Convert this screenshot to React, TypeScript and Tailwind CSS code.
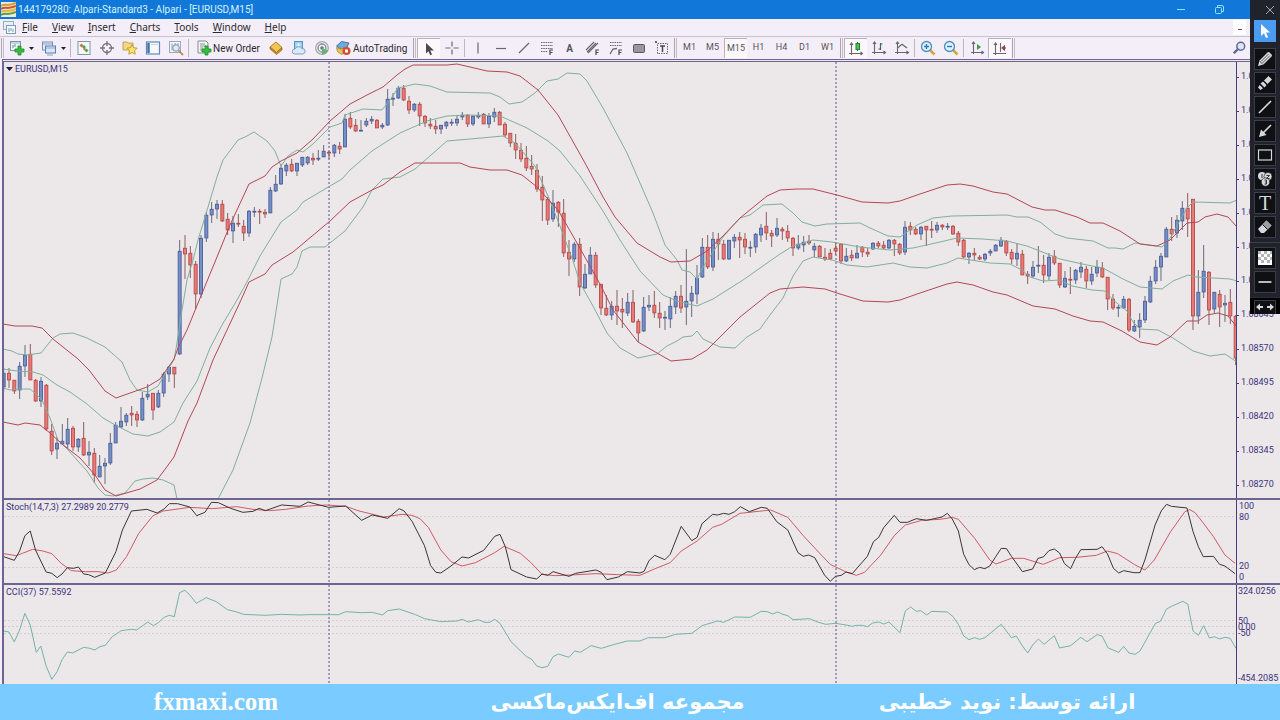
import type { ReactNode } from "react";

/* ---------- chart data ---------- */

// high, body top, body bottom, low, direction (u = up, d = down)
const CANDLES = `
368,373,387,392,u 368,373,380,388,d 380,380,391,394,d 362,366,390,399,u 345,355,366,377,u 344,354,380,380,d
379,380,401,402,d 377,381,401,407,u 384,385,429,431,d 424,431,451,455,d 437,443,449,459,u 424,441,444,444,u
418,429,444,448,u 426,428,447,451,d 438,439,447,452,u 422,438,455,456,d 441,452,455,466,u 448,453,475,483,d
455,466,477,477,u 458,463,466,484,u 433,443,463,465,u 422,425,443,443,u 407,421,427,428,u 413,415,422,426,u
406,413,415,426,d 411,414,420,427,d 392,398,420,421,u 384,394,397,400,u 393,393,410,420,d 390,393,407,408,u
372,374,393,397,u 366,367,374,382,u 367,367,374,388,d 240,251,354,355,u 235,248,254,279,d 246,253,265,278,d
261,264,294,309,d 235,238,294,298,u 212,215,238,242,u 202,209,215,223,u 200,204,209,219,u 200,204,221,222,d
213,219,230,235,d 216,223,231,243,u 214,223,224,227,d 220,226,233,241,d 210,211,233,237,u 207,211,212,217,u
209,211,212,224,d 209,212,214,218,d 187,190,213,213,u 175,184,191,192,u 164,168,184,185,u 163,165,171,176,u
159,164,171,172,d 163,163,171,176,u 157,157,165,167,u 156,157,163,165,u 153,158,160,165,d 150,158,159,161,u
145,151,157,157,u 151,152,153,159,d 144,145,153,157,u 142,146,149,154,d 114,119,147,147,u 112,118,127,129,d
119,125,131,132,d 120,130,131,131,u 118,121,125,127,u 116,119,121,124,u 119,120,128,128,d 123,125,127,129,u
89,99,125,126,u 93,98,99,106,u 86,88,98,99,u 85,88,100,101,d 96,101,110,114,d 103,104,110,112,u
102,104,116,126,d 115,116,123,127,d 118,124,126,129,d 120,126,129,134,d 125,125,129,134,u 121,122,126,129,u
119,122,123,126,u 116,119,123,126,u 112,115,117,120,u 114,115,124,127,d 115,116,124,126,u 112,115,117,119,u
113,114,124,124,d 113,116,124,128,u 108,112,117,122,u 111,112,125,125,d 122,124,135,137,d 133,133,143,147,d
134,143,150,159,d 143,150,159,162,d 146,158,168,171,d 155,166,169,175,d 164,170,189,192,d 176,187,200,221,d
197,199,220,225,d 190,203,219,222,u 201,202,212,227,d 199,213,253,257,d 240,252,259,276,d 242,244,259,262,u
238,244,287,296,d 264,274,288,289,u 247,255,274,274,u 252,255,285,288,d 284,284,308,315,d 295,308,315,316,d
301,306,315,320,u 290,306,311,325,d 298,309,312,328,d 293,302,313,316,u 290,302,322,323,d 319,321,333,342,d
297,307,331,332,u 295,305,307,311,u 291,305,313,318,d 302,313,318,328,d 311,317,318,330,u 297,306,319,328,u
291,296,307,314,u 285,296,308,313,d 249,301,307,325,u 286,293,301,317,u 265,278,294,304,u 238,247,277,278,u
235,247,267,269,d 232,239,267,271,u 233,239,244,260,d 240,244,259,260,d 240,240,259,260,u 234,237,241,248,u
232,237,240,258,d 233,239,247,254,d 241,247,248,257,u 233,234,247,253,u 224,228,235,242,u 212,226,233,240,d
230,233,236,247,d 218,228,235,237,u 227,229,231,240,d 225,231,238,242,d 237,238,248,256,d 235,244,248,250,u
236,242,245,252,u 235,241,243,245,d 243,246,250,257,u 245,246,257,257,d 248,257,259,261,d 249,253,259,260,d
242,248,251,255,d 244,244,261,264,d 248,256,261,262,u 250,255,258,261,d 245,253,258,258,u 246,247,252,257,d
248,252,254,257,d 242,243,249,250,u 241,243,246,248,d 241,245,248,249,d 239,240,248,249,u 239,240,244,256,d
243,244,253,255,d 221,227,252,255,u 222,226,230,235,d 227,229,234,235,d 226,227,234,240,u 226,226,230,246,d
221,229,230,238,d 222,225,230,233,u 224,225,227,230,d 223,226,227,230,u 225,226,234,235,d 231,233,242,246,d
239,240,257,258,d 252,253,257,264,u 248,253,255,261,d 255,257,259,260,d 253,254,259,261,u 249,251,253,256,u
244,245,251,251,u 237,240,246,247,u 240,241,253,256,d 249,252,259,264,d 243,253,259,266,u 250,254,275,275,d
271,274,276,284,d 261,267,276,278,u 246,265,266,273,u 255,265,275,283,d 253,257,276,280,u 250,256,263,265,d
263,263,285,288,d 271,278,287,288,u 267,279,280,294,d 269,270,280,284,u 262,267,272,278,u 266,269,281,288,d
267,274,281,285,u 260,267,273,277,u 262,268,277,278,d 277,277,299,310,d 294,299,308,310,d 305,307,308,317,u
296,299,308,309,u 298,299,330,332,d 320,326,331,332,u 313,320,327,338,u 296,301,320,323,u 276,281,302,303,u
260,267,281,284,u 253,256,267,281,u 227,229,257,257,u 217,229,234,241,d 215,220,233,238,u 201,208,221,230,u
193,208,219,237,d 199,199,316,330,d 270,292,316,324,u 245,271,292,298,u 271,272,310,325,d 292,292,309,313,u
290,294,307,327,d 295,303,305,322,u 289,302,316,324,d 315,316,358,365,d`
  .trim()
  .split(/\s+/)
  .map((row) => {
    const [h, t, b, l, dir] = row.split(",");
    return { high: +h, top: +t, bottom: +b, low: +l, up: dir === "u" };
  });

const ENVELOPES = [
  "3,324 15,326 32,326 42,328 53,339 68,351 78,359 89,370 105,391 116,398 133,392 147,387 160,379 174,359 178,348 187,330 196,308 217,257 230,225 249,184 265,176 272,167 281,161 297,153 313,139 330,121 350,104 367,95 383,87 397,75 405,69 413,65 447,65 457,64 470,67 487,71 507,72 520,76 538,90 558,115 585,163 603,197 615,217 637,243 660,257 671,262 690,261 707,251 723,236 740,218 767,196 780,190 797,189 813,189 837,195 862,202 888,203 900,201 920,194 947,185 960,184 973,186 993,192 1007,194 1032,207 1045,210 1055,210 1077,217 1090,223 1103,223 1120,231 1140,244 1157,246 1170,240 1187,223 1198,222 1205,217 1217,214 1228,217 1237,227",
  "3,422 18,425 25,423 40,425 50,433 62,444 80,458 95,475 105,490 116,496 140,489 157,480 163,472 174,457 188,421 197,403 213,360 227,330 241,300 249,282 265,274 272,265 293,252 330,221 350,202 372,190 383,185 400,172 415,163 460,163 470,167 490,170 507,170 522,175 537,187 558,210 577,243 600,284 613,310 638,342 657,353 671,361 692,359 707,350 740,317 770,293 780,289 803,287 825,289 840,294 863,301 888,302 900,300 920,293 947,284 957,282 973,285 993,292 1007,295 1033,306 1055,309 1073,316 1090,321 1103,322 1122,331 1140,342 1157,345 1170,337 1187,321 1198,321 1207,315 1218,313 1228,316 1237,327",
];

const BANDS = [
  "3,349 12,351 18,354 27,355 41,353 53,338 60,334 73,333 87,338 105,347 122,362 130,380 137,390 148,392 158,386 165,374 174,360 177,343 182,310 187,280 193,260 198,240 205,217 217,177 223,160 238,140 247,136 254,132 267,141 275,151 281,166 288,156 297,150 303,152 313,144 330,127 342,123 345,115 363,109 382,110 390,100 398,88 415,84 430,86 447,92 490,93 500,97 509,104 522,102 535,93 547,81 558,79 567,73 580,74 587,81 603,108 627,153 653,213 665,245 677,260 682,270 690,272 697,279 703,267 723,237 740,218 750,215 763,205 782,204 793,213 802,222 815,226 827,224 860,223 870,228 888,236 900,237 917,225 933,218 952,216 1007,215 1017,217 1028,217 1040,222 1055,234 1067,238 1093,241 1108,248 1115,248 1123,249 1135,243 1162,247 1170,238 1187,208 1193,202 1230,203 1237,200",
  "3,369 17,371 33,372 43,375 57,385 70,392 87,404 103,418 117,426 133,434 148,436 160,432 174,422 183,403 197,381 210,348 222,325 237,300 248,280 260,256 281,222 297,210 303,202 330,186 342,179 350,170 372,151 400,133 427,121 447,116 467,115 500,116 527,128 548,141 560,151 580,176 603,211 620,240 640,271 663,295 677,301 697,306 713,299 743,280 780,254 793,246 813,240 832,242 860,247 890,250 913,248 940,242 957,238 983,239 1007,241 1027,246 1060,259 1087,265 1103,268 1123,279 1140,287 1162,289 1173,281 1188,275 1197,277 1230,279 1237,281",
  "3,388 10,390 20,389 30,389 35,393 42,400 50,418 58,440 68,450 87,471 98,488 105,495 113,496 125,493 135,481 143,479 153,478 163,480 174,485 177,499",
  "218,499 233,470 250,423 262,378 272,337 277,305 281,279 292,274 297,267 302,251 310,247 325,247 345,231 363,207 372,190 383,179 400,177 415,169 447,141 470,139 503,136 515,143 535,166 548,196 560,226 573,261 580,283 593,306 607,333 620,348 638,358 657,354 667,346 677,341 683,337 692,336 697,331 703,339 720,347 735,348 747,337 760,329 770,315 783,298 793,276 803,261 813,257 832,260 847,265 867,267 893,263 910,267 927,268 947,263 958,258 990,263 1010,264 1022,270 1030,277 1043,281 1060,280 1072,286 1092,290 1105,291 1113,300 1127,311 1133,322 1140,329 1158,330 1173,338 1193,351 1210,356 1225,354 1237,362",
];

// indicator series are sampled on a finer grid: 2.45 units per column, 3 per row
const STOCH_MAIN =
  "9,185 35,196 48,168 61,122 74,108 87,165 113,231 127,235 140,248 152,237 165,218 180,220 192,216 205,237 217,239 232,247 258,234 284,170 300,105 322,48 360,43 385,54 402,42 415,26 435,26 465,36 482,62 502,52 518,22 535,23 565,40 595,52 620,49 635,40 650,47 690,30 735,34 755,21 805,37 847,33 886,76 912,60 950,70 978,41 990,48 1010,80 1040,152 1055,212 1068,232 1080,234 1105,213 1132,186 1148,189 1185,166 1212,124 1225,118 1238,155 1252,224 1290,246 1315,252 1328,237 1342,241 1355,230 1394,244 1410,235 1460,225 1473,232 1487,254 1515,246 1537,230 1568,234 1578,229 1590,197 1604,181 1629,194 1642,178 1655,138 1669,94 1695,137 1708,127 1720,86 1746,58 1758,60 1773,55 1786,58 1800,50 1814,35 1836,50 1865,37 1880,40 1903,80 1930,105 1955,173 1968,184 1981,180 1996,188 2020,240 2034,259 2047,244 2061,241 2073,231 2088,236 2125,184 2140,140 2153,127 2165,98 2191,61 2205,82 2223,82 2245,71 2270,76 2308,66 2321,55 2333,72 2348,108 2361,178 2374,209 2387,224 2400,217 2413,221 2425,213 2440,184 2453,160 2466,161 2478,184 2505,230 2530,222 2543,190 2556,186 2570,167 2583,162 2596,174 2608,206 2623,221 2635,190 2648,164 2688,163 2700,155 2713,176 2728,220 2741,234 2753,227 2778,233 2793,233 2805,195 2830,90 2845,48 2858,28 2870,34 2908,39 2923,110 2936,155 2948,185 2973,184 2988,208 3001,213 3026,236";
const STOCH_SIGNAL =
  "9,176 40,182 55,175 80,163 105,168 127,176 150,205 175,227 210,230 240,230 265,234 285,225 310,185 340,115 375,62 400,48 465,37 520,41 580,35 620,43 660,47 700,43 755,33 800,30 847,34 880,48 940,66 985,58 1010,61 1030,72 1050,98 1080,165 1105,200 1132,213 1165,203 1212,173 1235,154 1275,175 1300,202 1328,238 1360,242 1400,240 1460,236 1515,239 1568,241 1603,222 1642,203 1669,168 1708,138 1746,97 1768,88 1813,55 1888,45 1930,67 1968,122 2003,168 2034,208 2073,231 2098,241 2118,232 2158,180 2191,122 2218,90 2258,76 2303,73 2333,67 2348,73 2388,130 2425,195 2440,207 2478,190 2508,190 2556,208 2596,188 2638,187 2686,181 2713,168 2738,176 2780,209 2805,225 2828,195 2868,110 2903,50 2915,44 2928,53 2948,84 2973,125 3001,180 3026,205";
const CCI =
  "9,408 22,411 35,441 48,405 61,355 74,390 89,472 100,453 113,513 127,553 140,530 152,494 165,471 178,474 205,457 220,460 232,465 245,455 258,451 275,425 297,407 322,403 335,405 362,381 376,392 388,383 402,367 415,361 427,365 440,293 453,286 465,300 481,325 505,308 530,320 557,344 580,351 597,358 650,361 690,358 735,360 755,359 830,359 847,350 885,353 912,352 937,360 950,347 978,342 1018,359 1040,371 1080,380 1120,378 1132,373 1148,381 1172,374 1187,382 1200,382 1212,373 1225,385 1252,440 1290,485 1302,492 1315,513 1328,518 1342,514 1355,485 1368,477 1394,487 1408,468 1422,472 1448,452 1473,460 1500,450 1537,438 1568,438 1588,428 1629,428 1655,418 1695,415 1720,392 1758,378 1773,382 1800,366 1838,367 1865,349 1880,350 1893,357 1905,351 1918,358 1930,362 1943,374 1983,371 2003,381 2023,388 2047,385 2073,390 2088,394 2098,391 2113,391 2125,395 2138,384 2153,381 2165,387 2178,381 2205,413 2218,348 2231,336 2245,349 2256,347 2270,360 2283,349 2321,351 2335,365 2348,388 2361,423 2374,434 2388,428 2400,433 2413,428 2453,388 2478,428 2490,423 2505,453 2518,474 2530,450 2544,432 2558,448 2583,422 2596,459 2623,452 2648,427 2663,440 2688,419 2700,423 2715,459 2741,472 2753,454 2766,474 2781,478 2793,468 2818,413 2831,385 2843,379 2858,342 2870,334 2898,319 2910,327 2923,408 2936,421 2949,392 2963,429 2975,425 2988,432 3001,427 3014,430 3028,460";

const GRID = "translate(0 495) scale(0.408163 0.333333)";
const DAY_LINES = [329, 836];
const PRICES = Array.from({ length: 13 }, (_, i) => (1.0917 - i * 0.00075).toFixed(5));

/* ---------- chart parts ---------- */

function Line({ points, color, transform }: { points: string; color: string; transform?: string }) {
  return (
    <polyline
      points={points}
      transform={transform}
      fill="none"
      stroke={color}
      strokeWidth="1"
      strokeLinejoin="round"
      vectorEffect="non-scaling-stroke"
    />
  );
}

function DayLines({ top, bottom }: { top: number; bottom: number }) {
  return (
    <>
      {DAY_LINES.map((x) => (
        <path key={x} d={`M${x} ${top}V${bottom}`} stroke="#54528c" strokeDasharray="2 2" vectorEffect="non-scaling-stroke" />
      ))}
    </>
  );
}

function Levels({ at }: { at: number[] }) {
  return (
    <>
      {at.map((y) => (
        <path key={y} d={`M4 ${y}H1236`} stroke="#d3cdcf" strokeDasharray="2 2" vectorEffect="non-scaling-stroke" />
      ))}
    </>
  );
}

function Pane({
  title,
  top,
  height,
  sizeClass,
  plot,
  axis,
  marker,
}: {
  title: string;
  top: number;
  height: number;
  sizeClass: string;
  plot: ReactNode;
  axis: ReactNode;
  marker?: boolean;
}) {
  return (
    <section className={`relative flex shrink-0 ${sizeClass}`} aria-label={title}>
      <svg className="h-full min-w-0 flex-1" viewBox={`4 ${top} 1232 ${height}`} preserveAspectRatio="none" aria-hidden="true">
        {plot}
      </svg>
      <h2 className="absolute left-0.5 top-px flex h-3 items-center gap-0.5 text-[9px] leading-3 text-[#3a3480]">
        {marker && (
          <svg className="h-1 w-[7px]" viewBox="0 0 7 4" aria-hidden="true">
            <path d="M0 0h7L3.500 4z" fill="#1b1850" />
          </svg>
        )}
        {title}
      </h2>
      <div className="flex w-11 shrink-0 flex-col border-l border-[#443d80] text-[9px] text-[#3a3480]">{axis}</div>
    </section>
  );
}

/* ---------- toolbar parts ---------- */

function Svg({ children, className = "size-4" }: { children: ReactNode; className?: string }) {
  return (
    <svg className={`${className} shrink-0`} viewBox="0 0 16 16" fill="none" aria-hidden="true">
      {children}
    </svg>
  );
}

function Tool({ label, active, children }: { label: string; active?: boolean; children: ReactNode }) {
  return (
    <button
      type="button"
      aria-label={label}
      className={`flex h-5 w-[23px] items-center justify-center text-[9px] text-[#56525c] ${active ? "border-l border-t border-[#b9b2ba] bg-[#fbf8fc]" : ""}`}
    >
      {children}
    </button>
  );
}

const Separator = () => <span className="mx-px h-[18px] w-px bg-[#bdb5bf]" />;
const Grip = () => (
  <span className="flex gap-px px-px">
    <span className="h-5 w-px bg-[#aaa3ad]" />
    <span className="h-5 w-px bg-[#c4bdc7]" />
  </span>
);
const Caret = () => (
  <svg className="h-[3px] w-[5px]" viewBox="0 0 5 3" aria-hidden="true">
    <path d="M0 0h5L2.500 3z" fill="#222" />
  </svg>
);

const gray = "#6a666e";

const icons = {
  newChart: (
    <Svg>
      <rect x="1.500" y="1.500" width="10" height="9" fill="#eef3f8" stroke="#7e93ad" />
      <path d="M2 3h9" stroke="#9fb3ca" />
      <path d="M4 8V5M6 7V4" stroke="#6c8f84" />
      <path d="M9 6h3v3h3v3h-3v3H9v-3H6V9h3z" fill="#35c13f" stroke="#1a8a26" strokeWidth=".8" />
    </Svg>
  ),
  profiles: (
    <Svg>
      <rect x="1.500" y="2" width="10" height="8" fill="#e6eef7" stroke="#7590b5" />
      <path d="M2 4h9" stroke="#86a3c8" />
      <rect x="4.500" y="6" width="10" height="7" fill="#dbe7f4" stroke="#5f80ad" />
      <path d="M5 8h9M6 15h6" stroke="#86a3c8" />
    </Svg>
  ),
  market: (
    <Svg>
      <rect x="2" y="1.500" width="12" height="13" fill="#f5f8fb" stroke="#7f96ae" />
      <path d="M5.500 3.500l2 2-2 2-2-2z" fill="#d9664f" />
      <path d="M8 5l2 2-2 2-2-2z" fill="#3cae46" />
      <path d="M10.500 8.500l2 2-2 2-2-2z" fill="#3cae46" />
      <path d="M8.500 7.500l1.500 1.500-1.500 1.500L7 9z" fill="#d9664f" />
    </Svg>
  ),
  dataWindow: (
    <Svg>
      <circle cx="8" cy="8" r="4.500" stroke="#77727c" strokeWidth="1.300" />
      <path d="M8 1v5M8 10v5M1 8h5M10 8h5" stroke="#77727c" strokeWidth="1.300" />
    </Svg>
  ),
  navigator: (
    <Svg>
      <path d="M1 4V2h4l1 1h5v7H1z" fill="#f3d884" stroke="#b8923c" strokeWidth=".8" />
      <path d="M10 4.500l1.600 3.200 3.500.5-2.500 2.500.6 3.500L10 12.500l-3.200 1.700.6-3.500L5 8.200l3.500-.5z" fill="#fbe36d" stroke="#bd9423" strokeWidth=".9" />
    </Svg>
  ),
  terminal: (
    <Svg>
      <rect x="1.500" y="2" width="13" height="12" fill="#f5f9fd" stroke="#6789b8" strokeWidth="1.200" />
      <path d="M3.500 3v10" stroke="#4672ad" strokeWidth="2.500" />
      <path d="M6 4.500h7" stroke="#c8d6e6" />
    </Svg>
  ),
  tester: (
    <Svg>
      <rect x="1.500" y="1.500" width="11" height="11" fill="#f4f5f8" stroke="#a2a9b5" />
      <path d="M4 3.500v7M7 3v3M10 3v2" stroke="#8ba3bd" />
      <circle cx="8" cy="8" r="3.300" fill="#dcebf5" stroke="#7592ae" />
      <path d="M10.500 10.500L15 15" stroke="#b7906a" strokeWidth="1.800" />
    </Svg>
  ),
  order: (
    <Svg>
      <path d="M2 1h8l2 2v10H2z" fill="#f4f5f6" stroke="#858b90" />
      <path d="M4 4h5M4 6h6M4 8h3M4 10h3" stroke="#8d9694" />
      <path d="M9 6h3v3h3v3h-3v3H9v-3H6V9h3z" fill="#35c13f" stroke="#1a8a26" strokeWidth=".8" />
    </Svg>
  ),
  book: (
    <Svg>
      <path d="M2 7l6-5 6 5.500-5.500 5z" fill="#f1c553" stroke="#b07d23" />
      <path d="M2 7l6.500 5.500L14 7.500V10l-5.500 4.500L2 9z" fill="#c98f2b" stroke="#a06f1e" strokeWidth=".8" />
    </Svg>
  ),
  cloud: (
    <Svg>
      <rect x="3.500" y="1.500" width="8" height="7" fill="#9fd0ef" stroke="#4f94c4" />
      <path d="M7.500 3v4M5.500 5h4" stroke="#fff" />
      <path d="M3.500 14a2.500 2.500 0 01.5-5 4 4 0 017-.5 2.800 2.800 0 011 5.500z" fill="#dbe8f6" stroke="#7f9fc9" />
    </Svg>
  ),
  signals: (
    <Svg>
      <circle cx="8" cy="8" r="6.300" stroke="#a6a9ac" strokeWidth="1.300" />
      <circle cx="8" cy="8" r="4" stroke="#88908f" strokeWidth="1.300" />
      <circle cx="8" cy="8" r="1.800" fill="#5f7f70" />
      <path d="M8 8v6.500a6.500 6.500 0 006-4z" fill="#67b373" />
    </Svg>
  ),
  auto: (
    <Svg>
      <path d="M1.500 6l5-4.500L14 3l-2 4-6 2z" fill="#6fa9da" stroke="#3d78ad" />
      <path d="M1.500 7.500l4 1.500 7-2-1 5-5 2.500-4-3z" fill="#eac05a" stroke="#ac8129" strokeWidth=".8" />
      <circle cx="11.500" cy="11" r="4" fill="#d64a34" />
      <rect x="10" y="9.500" width="3" height="3" fill="#fff" />
    </Svg>
  ),
  cursor: (
    <Svg>
      <path d="M5 2v10.500l2.500-2.300 1.700 4 1.800-.8-1.700-3.900H13z" fill="#4b474f" />
    </Svg>
  ),
  cross: (
    <Svg>
      <path d="M8 1.500v5M8 9.500v5M1.500 8h5M9.500 8h5" stroke={gray} strokeWidth="1.200" />
    </Svg>
  ),
  vline: (
    <Svg>
      <path d="M8 2.500v11" stroke={gray} strokeWidth="1.200" />
    </Svg>
  ),
  hline: (
    <Svg>
      <path d="M3 8.500h10" stroke={gray} strokeWidth="1.200" />
    </Svg>
  ),
  trend: (
    <Svg>
      <path d="M3 13L13 3" stroke={gray} strokeWidth="1.300" />
    </Svg>
  ),
  fibo: (
    <Svg>
      <path d="M2 2.500h12M2 5.500h12M2 8.500h12M2 11.500h7" stroke={gray} strokeDasharray="1.500 .8" />
      <path d="M11 15v-5h3M11 12.500h2.500" stroke="#4c4850" strokeWidth="1.200" />
    </Svg>
  ),
  channel: (
    <Svg>
      <path d="M1 10L9 2M3 13L13 3M2 12l9-9" stroke={gray} strokeWidth="1.100" />
      <path d="M11 15v-5h3M11 12.500h2.500" stroke="#4c4850" strokeWidth="1.200" />
    </Svg>
  ),
  fan: (
    <Svg>
      <path d="M2 2.500h12M2 5.500h12" stroke={gray} strokeDasharray="1.500 .8" />
      <path d="M2 14l3-5 4-.5" stroke={gray} strokeWidth="1.300" />
      <path d="M11 15v-5h3M11 12.500h2.500" stroke="#4c4850" strokeWidth="1.200" />
    </Svg>
  ),
  shape: (
    <Svg>
      <rect x="2.500" y="4.500" width="11" height="8" rx="1" fill="#9a979e" stroke="#5c5861" />
    </Svg>
  ),
  textLabel: (
    <Svg>
      <rect x="3.500" y="3.500" width="10" height="10" stroke={gray} strokeDasharray="1.500 1" />
      <path d="M6 6h5M8.500 6v6" stroke="#4c4850" strokeWidth="1.500" />
      <path d="M1 1h2v2H1z" fill={gray} />
    </Svg>
  ),
  candles: (
    <Svg>
      <path d="M3.500 2v12M1 12.500h13M2 4l1.500-2L5 4M12.500 11l2 1.500-2 1.500" stroke={gray} strokeWidth="1.100" />
      <path d="M9.500 1v9" stroke="#1f8533" />
      <rect x="8" y="2.500" width="3.500" height="6" fill="#4fc258" stroke="#1f8533" />
    </Svg>
  ),
  bars: (
    <Svg>
      <path d="M3.500 2v12M1 12.500h13M2 4l1.500-2L5 4M12.500 11l2 1.500-2 1.500" stroke={gray} strokeWidth="1.100" />
      <path d="M9.500 3v7M7.500 9h2M9.500 4h2" stroke="#3f6c4b" strokeWidth="1.200" />
    </Svg>
  ),
  lineChart: (
    <Svg>
      <path d="M3.500 2v12M1 12.500h13M2 4l1.500-2L5 4M12.500 11l2 1.500-2 1.500" stroke={gray} strokeWidth="1.100" />
      <path d="M4 8q4-5 5-3l4 3" stroke="#5b7060" strokeWidth="1.200" />
    </Svg>
  ),
  zoomIn: (
    <Svg>
      <path d="M10 10l4.500 4.500" stroke="#d6a43b" strokeWidth="2.500" />
      <circle cx="6.500" cy="6.500" r="5" fill="#dff0fa" stroke="#4b8fc2" strokeWidth="1.300" />
      <path d="M6.500 4v5M4 6.500h5" stroke="#3577ad" strokeWidth="1.400" />
    </Svg>
  ),
  zoomOut: (
    <Svg>
      <path d="M10 10l4.500 4.500" stroke="#d6a43b" strokeWidth="2.500" />
      <circle cx="6.500" cy="6.500" r="5" fill="#dff0fa" stroke="#4b8fc2" strokeWidth="1.300" />
      <path d="M4 6.500h5" stroke="#3577ad" strokeWidth="1.400" />
    </Svg>
  ),
  scroll: (
    <Svg>
      <path d="M4.500 2v12M2 12.500h12M3 4l1.500-2L6 4M12.500 11l2 1.500-2 1.500" stroke={gray} strokeWidth="1.100" />
      <path d="M8 4l4 3-4 3z" fill="#3d9c4b" />
    </Svg>
  ),
  shift: (
    <Svg>
      <path d="M3.500 2v12M1 12.500h13M2 4l1.500-2L5 4M8.500 2v9" stroke={gray} strokeWidth="1.100" />
      <path d="M14 7h-3M12.500 5L10 7l2.500 2z" stroke="#93404a" fill="#93404a" strokeWidth="1.100" />
    </Svg>
  ),
};

const MENUS = ["File", "View", "Insert", "Charts", "Tools", "Window", "Help"];

/* ---------- annotation palette ---------- */

const light = "#d7d8da";
const PALETTE: { label: string; icon: ReactNode }[] = [
  {
    label: "Pencil",
    icon: (
      <Svg>
        <path d="M1 15l1.500-5.500L10.500 1.500q1-1 2 0l2 2q1 1 0 2L6.500 13.500z" fill={light} />
        <path d="M4 10.500L11.500 3M5.500 12L13 4.500M2.500 10l3.500 3.500" stroke="#333741" strokeWidth=".8" />
      </Svg>
    ),
  },
  {
    label: "Highlighter",
    icon: (
      <Svg>
        <path d="M7 5.500L11.500 1 15 4.500 10.500 9zM3.500 8.500L6 6.500 9.500 10l-2 2.500zM1 12.500l1.700-2.500L6 13.300 3.500 15z" fill={light} />
      </Svg>
    ),
  },
  { label: "Line", icon: <Svg><path d="M2 14L14 2" stroke={light} strokeWidth="1.700" /></Svg> },
  {
    label: "Arrow",
    icon: (
      <Svg>
        <path d="M14 2L6 10" stroke={light} strokeWidth="1.700" />
        <path d="M2 14l2-7.500L9.500 12z" fill={light} />
      </Svg>
    ),
  },
  { label: "Rectangle", icon: <Svg><rect x="1.500" y="3" width="13" height="10" stroke={light} strokeWidth="1.200" /></Svg> },
  {
    label: "Numbering",
    icon: (
      <Svg>
        <circle cx="5" cy="5" r="4" fill={light} />
        <circle cx="11" cy="5.500" r="4" fill={light} stroke="#15171d" strokeWidth=".6" />
        <circle cx="8.500" cy="11" r="4.200" fill={light} stroke="#15171d" strokeWidth=".6" />
        <path d="M5 3v4M9.500 4.500h3l-3 3h3M7.500 9h2v4h-2M8 11h1.500" stroke="#333741" />
      </Svg>
    ),
  },
  {
    label: "Text",
    icon: <span className="font-['Liberation_Serif',serif] text-[20px] leading-none text-[#d7d8da]">T</span>,
  },
  {
    label: "Eraser",
    icon: (
      <Svg>
        <path d="M1 10l8.500-8.500 5 5L7 14H4z" fill={light} />
        <path d="M5.500 5.500l4-4 5 5-4 4z" fill="#9b9da2" />
        <path d="M5.500 5.500l5 5" stroke="#15171d" />
      </Svg>
    ),
  },
];

function PaletteButton({ label, children, selected }: { label: string; children: ReactNode; selected?: boolean }) {
  return (
    <button
      type="button"
      aria-label={label}
      className={`flex h-[22px] w-[22px] shrink-0 items-center justify-center border ${selected ? "border-[#4b9cf0] bg-[#4b9cf0]" : "border-[#3b3e47] bg-[#0e1014]"}`}
    >
      {children}
    </button>
  );
}

function Palette() {
  return (
    <aside className="absolute right-0 top-0 flex h-[314px] w-[30px] flex-col items-center overflow-hidden bg-[#20232c]" aria-label="Annotation tools">
      <button type="button" aria-label="Close tools" className="flex h-5 w-full shrink-0 items-center justify-end pr-1.5">
        <svg className="size-2" viewBox="0 0 8 8" aria-hidden="true">
          <path d="M0 0l8 8M8 0L0 8" stroke="#a6a7ab" />
        </svg>
      </button>
      <PaletteButton label="Select" selected>
        <Svg>
          <path d="M4 1v12l3-2.700L9 15l2-.8-2-4.700h4z" fill="#fff" />
        </Svg>
      </PaletteButton>
      <div className="mt-1.5 flex flex-col gap-0.5">
        {PALETTE.map((p) => (
          <PaletteButton key={p.label} label={p.label}>
            {p.icon}
          </PaletteButton>
        ))}
      </div>
      <div className="mt-1 flex w-full flex-col items-center gap-0.5 border-t border-[#3b3e47] pt-1">
        <PaletteButton label="Opacity">
          <Svg>
            <path d="M1 1h14v14H1z" fill="#fff" />
            <path d="M1 1h3v3H1zM7 1h3v3H7zM4 4h3v3H4zM10 4h3v3h-3zM1 7h3v3H1zM7 7h3v3H7zM4 10h3v3H4zM10 10h3v3h-3zM13 1h2v3h-2zM13 7h2v3h-2z" fill="#b3b4b7" />
          </Svg>
        </PaletteButton>
        <PaletteButton label="Stroke width">
          <Svg>
            <path d="M1.500 8h13" stroke={light} strokeWidth="1.700" />
          </Svg>
        </PaletteButton>
      </div>
      <div className="mt-1 flex w-full flex-1 items-start justify-center border-t border-[#2b2d33] bg-black pt-0.5">
        <PaletteButton label="Move palette">
          <svg className="h-2.5 w-5 -translate-y-1" viewBox="0 0 20 10" aria-hidden="true">
            <path d="M1 5l4-3.500v2.500h3v2H5v2.500zM19 5l-4-3.500v2.500h-3v2h3v2.500z" fill={light} />
          </svg>
        </PaletteButton>
      </div>
    </aside>
  );
}

/* ---------- page ---------- */

export default function App() {
  return (
    <div className="relative flex min-h-screen flex-col bg-[#f4eef8] font-['Roboto','Noto_Sans',sans-serif] text-[#2c2a30]">
      <header className="flex h-[19px] shrink-0 items-center bg-[#1177d9] pl-px pr-[53px] text-[10px] text-[#d3f2fb]">
        <svg className="mr-0.5 size-[15px]" viewBox="0 0 15 15" fill="none" aria-hidden="true">
          <path d="M0 0h15v15H0z" fill="#f2ead2" />
          <path d="M0 4c4-3 7 1 15-3" stroke="#c9a23c" strokeWidth="2" />
          <path d="M0 7c4-3 7 1 15-3" stroke="#d2502f" strokeWidth="2" />
          <path d="M0 10c4-3 7 1 15-3" stroke="#e3b843" strokeWidth="2" />
          <path d="M0 13c4-3 7 1 15-3" stroke="#58a244" strokeWidth="2" />
        </svg>
        <h1>144179280: Alpari-Standard3 - Alpari - [EURUSD,M15]</h1>
        <div className="ml-auto flex gap-[22px]">
          <button type="button" aria-label="Minimize" className="flex size-4 items-center justify-center">
            <span className="h-px w-2 bg-[#8fe3f3]" />
          </button>
          <button type="button" aria-label="Restore" className="flex size-4 items-center justify-center">
            <svg className="size-[9px]" viewBox="0 0 9 9" fill="none" stroke="#8fe3f3" aria-hidden="true">
              <rect x=".5" y="2.500" width="6" height="6" rx="1" />
              <path d="M2.500 2V.500H7A1.500 1.500 0 018.500 2v4.500H7" />
            </svg>
          </button>
        </div>
      </header>

      <nav
        className="flex h-[18px] shrink-0 items-center border-b border-[#c9c2cb] pl-[3px] pr-[34px] font-['Noto_Sans',sans-serif] text-[10px]"
        aria-label="Main menu"
      >
        <svg className="mr-1.5 size-[13px]" viewBox="0 0 13 13" fill="none" aria-hidden="true">
          <rect x=".5" y=".5" width="10" height="8" fill="#e5f0f7" stroke="#93adc3" />
          <rect x="3.500" y="4.500" width="9" height="8" fill="#f4f9fc" stroke="#7c9db8" />
          <path d="M6 11V7M8 10V7M10 11V8" stroke="#7c9db8" />
        </svg>
        <ul className="flex gap-3.5">
          {MENUS.map((m) => (
            <li key={m}>
              <button type="button">
                <span className="underline underline-offset-1">{m[0]}</span>
                {m.slice(1)}
              </button>
            </li>
          ))}
        </ul>
        <button type="button" aria-label="Minimize chart" className="ml-auto flex h-[15px] w-[13px] items-center justify-center bg-white">
          <span className="mt-1 h-px w-1 bg-[#555]" />
        </button>
      </nav>

      <div className="flex h-[22px] shrink-0 items-center pr-[34px]" role="toolbar" aria-label="Chart toolbar">
        <Grip />
        <button type="button" aria-label="New chart" className="flex h-5 w-8 items-center justify-center gap-1">
          {icons.newChart}
          <Caret />
        </button>
        <button type="button" aria-label="Profiles" className="flex h-5 w-8 items-center justify-center gap-1">
          {icons.profiles}
          <Caret />
        </button>
        <Separator />
        <Tool label="Market watch">{icons.market}</Tool>
        <Tool label="Data window">{icons.dataWindow}</Tool>
        <Tool label="Navigator">{icons.navigator}</Tool>
        <Tool label="Terminal">{icons.terminal}</Tool>
        <Tool label="Strategy tester">{icons.tester}</Tool>
        <Separator />
        <button type="button" className="flex h-5 w-[74px] items-center gap-px whitespace-nowrap pl-1.5 text-[10px]">
          {icons.order}
          New Order
        </button>
        <Tool label="MetaEditor">{icons.book}</Tool>
        <Tool label="Virtual hosting">{icons.cloud}</Tool>
        <Tool label="Signals">{icons.signals}</Tool>
        <button type="button" className="flex h-5 w-[79px] items-center gap-0.5 whitespace-nowrap pl-0.5 text-[10px]">
          {icons.auto}
          AutoTrading
        </button>
        <Grip />
        <Tool label="Cursor" active>{icons.cursor}</Tool>
        <Tool label="Crosshair">{icons.cross}</Tool>
        <Separator />
        <Tool label="Vertical line">{icons.vline}</Tool>
        <Tool label="Horizontal line">{icons.hline}</Tool>
        <Tool label="Trendline">{icons.trend}</Tool>
        <Tool label="Fibonacci retracement">{icons.fibo}</Tool>
        <Tool label="Text"><span className="text-[10px] font-bold">A</span></Tool>
        <Tool label="Fibonacci channel">{icons.channel}</Tool>
        <Tool label="Fibonacci fan">{icons.fan}</Tool>
        <Tool label="Shapes">{icons.shape}</Tool>
        <Tool label="Text label">{icons.textLabel}</Tool>
        <Grip />
        {["M1", "M5", "M15", "H1", "H4", "D1", "W1"].map((t) => (
          <Tool key={t} label={t} active={t === "M15"}>
            {t}
          </Tool>
        ))}
        <Grip />
        <Tool label="Candlesticks" active>{icons.candles}</Tool>
        <Tool label="Bar chart">{icons.bars}</Tool>
        <Tool label="Line chart">{icons.lineChart}</Tool>
        <Separator />
        <Tool label="Zoom in">{icons.zoomIn}</Tool>
        <Tool label="Zoom out">{icons.zoomOut}</Tool>
        <Separator />
        <Tool label="Auto scroll">{icons.scroll}</Tool>
        <Tool label="Chart shift" active>{icons.shift}</Tool>
        <Grip />
        <button type="button" aria-label="Search" className="ml-auto">
          <Svg className="size-[14px]">
            <circle cx="10" cy="6" r="4.500" fill="#dfe4f2" stroke="#5a6a96" strokeWidth="1.700" />
            <path d="M6.500 9.500L2 14" stroke="#5a6a96" strokeWidth="2.800" />
          </Svg>
        </button>
      </div>

      <main className="ml-0.5 flex flex-1 flex-col border-l-2 border-t-[3px] border-[#6c6492] bg-[#ece7e8] [border-top-style:double]">
        <Pane
          title="EURUSD,M15"
          marker
          top={62}
          height={436}
          sizeClass="h-[436px]"
          plot={
            <>
              <DayLines top={62} bottom={498} />
              {CANDLES.map((c, i) => {
                const x = 3.67 + i * 5.3333;
                return (
                  <g key={i}>
                    <path d={`M${x} ${c.high}V${c.low}`} stroke={c.up ? "#5a5f70" : "#80504f"} strokeWidth=".9" />
                    <rect
                      x={x - 1.5}
                      y={c.top + 0.3}
                      width="3"
                      height={Math.max(0.8, c.bottom - c.top - 0.4)}
                      fill={c.up ? "#7590c6" : "#ea7a77"}
                      stroke={c.up ? "#4c5f9b" : "#b94a4a"}
                      strokeWidth=".9"
                    />
                  </g>
                );
              })}
              {BANDS.map((p) => (
                <Line key={p} points={p} color="#7fb09d" />
              ))}
              {ENVELOPES.map((p) => (
                <Line key={p} points={p} color="#b4475a" />
              ))}
            </>
          }
          axis={
            <ol className="flex h-full flex-col justify-between pb-[7px] pt-[9px]">
              {PRICES.map((p) => (
                <li key={p} className="flex h-3 items-center gap-0.5">
                  <span className="h-px w-0.5 bg-[#443d80]" />
                  {p}
                </li>
              ))}
            </ol>
          }
        />
        <div className="h-0.5 shrink-0 bg-[#6c6492]" />
        <Pane
          title="Stoch(14,7,3) 27.2989 20.2779"
          top={500}
          height={83}
          sizeClass="h-[83px]"
          plot={
            <>
              <Levels at={[516.5, 567.5]} />
              <DayLines top={500} bottom={583} />
              <Line points={STOCH_SIGNAL} color="#cf5a68" transform={GRID} />
              <Line points={STOCH_MAIN} color="#3a3638" transform={GRID} />
            </>
          }
          axis={
            <div className="flex h-full flex-col justify-between pl-0.5 pt-px leading-[11px]">
              <p className="w-5">100 80</p>
              <p className="w-3">20 0</p>
            </div>
          }
        />
        <div className="h-0.5 shrink-0 bg-[#6c6492]" />
        <Pane
          title="CCI(37) 57.5592"
          top={585}
          height={99}
          sizeClass="h-[99px]"
          plot={
            <>
              <Levels at={[620.5, 626.5, 633.5]} />
              <DayLines top={585} bottom={684} />
              <Line points={CCI} color="#74b3aa" transform={GRID} />
            </>
          }
          axis={
            <div className="flex h-full flex-col pl-px leading-3">
              <p>324.0256</p>
              <ul className="mt-[21px] leading-[6px]">
                <li>50</li>
                <li>0.00</li>
                <li>-50</li>
              </ul>
              <p className="mt-auto">-454.2085</p>
            </div>
          }
        />
      </main>

      <footer className="grid h-9 shrink-0 grid-cols-[432fr_371fr_408fr_69fr] items-center whitespace-nowrap bg-[#7acbff] text-center text-white">
        <a href="https://fxmaxi.com" className="font-['Liberation_Serif',serif] text-[25px] font-bold leading-9">
          fxmaxi.com
        </a>
        <p dir="rtl" lang="fa" className="font-['DejaVu_Sans',sans-serif] text-[21px] font-bold leading-9">
          مجموعه اف‌ایکس‌ماکسی
        </p>
        <p dir="rtl" lang="fa" className="font-['DejaVu_Sans',sans-serif] text-[21px] font-bold leading-9">
          ارائه توسط: نوید خطیبی
        </p>
      </footer>

      <Palette />
    </div>
  );
}
